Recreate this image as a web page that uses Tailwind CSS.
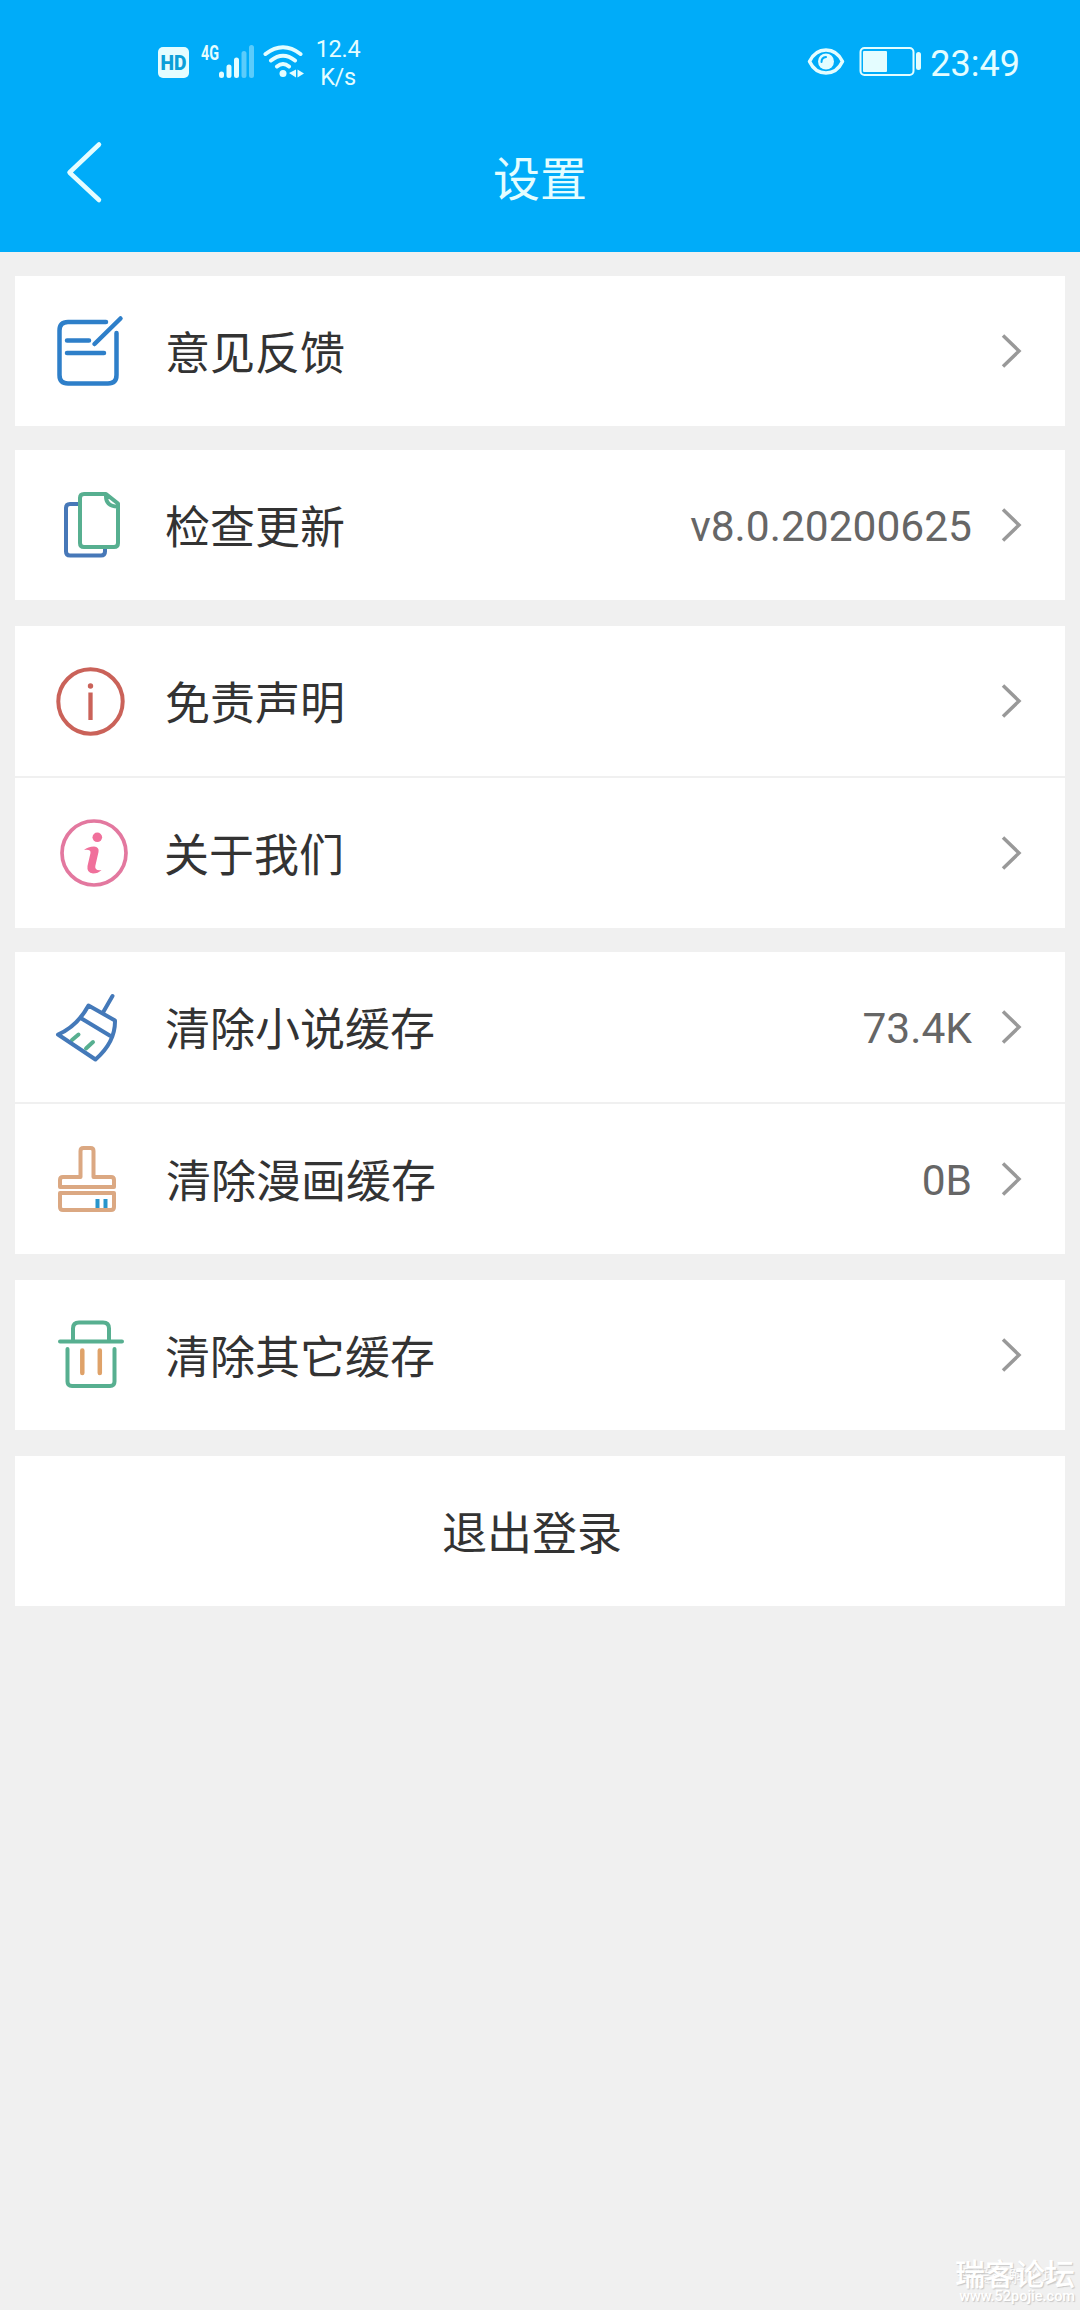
<!DOCTYPE html>
<html lang="zh-CN">
<head>
<meta charset="utf-8">
<title>设置</title>
<script src="https://cdn.jsdelivr.net/npm/@tailwindcss/browser@4"></script>
</head>
<body class="bg-[#f0f0f0]">
<div class="relative flex h-[2310px] w-[1080px] flex-col overflow-hidden bg-[#f0f0f0] font-['Roboto','Noto_Sans_CJK_SC',sans-serif] text-[45px] text-[#333]">
  <header class="h-[252px] bg-[#00acf9] text-[#e4fdff]">
    <div class="flex h-[126px] items-start justify-between pr-[60px] pl-[157px]">
      <div class="flex">
        <svg class="mt-[46px] h-8 w-8" viewBox="0 0 32 32"><rect x="1" y="1" width="31" height="31" rx="5" fill="currentColor"/><text x="16.5" y="23.5" text-anchor="middle" font-family="Roboto" font-weight="900" font-size="19.5" textLength="26" lengthAdjust="spacingAndGlyphs" fill="#0c9fd8">HD</text></svg>
        <svg class="mt-10 ml-3 h-10 w-[56px]" viewBox="201 40 56 40" fill="none" stroke="currentColor" stroke-linecap="round" stroke-width="5"><text x="201" y="60" stroke="none" fill="currentColor" font-family="Roboto" font-weight="700" font-size="20" textLength="18" lengthAdjust="spacingAndGlyphs">4G</text><path d="M221.500 74v1.500M229 67v8.500M236.500 60v15.500"/><path d="M244 53.500v22M251.500 47.500v28" opacity=".4"/></svg>
        <svg class="mt-10 ml-[5px] h-10 w-[42px]" viewBox="262 40 42 40" fill="none" stroke="currentColor" stroke-linecap="round" stroke-width="4"><path d="M265.500 54Q283 40.500 300.500 54M271 60.500Q283 51 295 60.500M277 66.500Q283 61.500 289 66.500"/><circle cx="283" cy="73.500" r="3.500" fill="currentColor" stroke="none"/><path d="M296 69.500v8l-7-4.500zM297.500 69.500l6.500 4-6.500 4z" fill="currentColor" stroke="none"/></svg>
        <div class="mt-[35px] ml-[11px] w-[46px] text-center text-[23.500px] leading-[28px] tracking-[-0.300px]">12.4<br>K/s</div>
      </div>
      <div class="flex">
        <svg class="mt-10 h-10 w-10" viewBox="806 40 40 40"><path d="M809.500 61.500Q815 50 826 50T842.500 61.500Q837 73 826 73T809.500 61.500Z" fill="none" stroke="currentColor" stroke-width="3.500" stroke-linejoin="round"/><circle cx="826" cy="61.500" r="8" fill="currentColor"/><path d="M821.500 62q0-4.500 4.500-5" fill="none" stroke="#00acf9" stroke-width="2" stroke-linecap="round"/></svg>
        <svg class="mt-10 ml-3 h-10 w-16" viewBox="858 40 64 40"><rect x="860.500" y="48" width="53" height="27" rx="4" fill="none" stroke="currentColor" stroke-width="2"/><rect x="863" y="51" width="24" height="21" rx="1" fill="currentColor"/><rect x="916" y="52" width="5" height="18" rx="2.500" fill="currentColor"/></svg>
        <div class="mt-[43px] ml-2 text-[36px] leading-[42px] whitespace-nowrap">23:49</div>
      </div>
    </div>
    <div class="grid h-[126px] grid-cols-[160px_1fr_160px]">
      <svg class="ml-[59px] h-20 w-[50px]" viewBox="60 126 50 80" fill="none" stroke="currentColor" stroke-width="4.500" stroke-linecap="round" stroke-linejoin="round"><path d="M100 144.500L70.500 172.500L100 200"/></svg>
      <h1 class="mt-[19px] text-center text-[47px] leading-[70px]">设置</h1>
    </div>
  </header>

  <main class="flex flex-col px-[15px] pt-6">
    <section class="flex h-[150px] items-center bg-white pr-[41px] pl-[35px]">
      <svg class="h-20 w-20" viewBox="50 311 80 80" fill="none" stroke="#2e7fc9" stroke-width="4.500" stroke-linecap="round" stroke-linejoin="round"><path d="M106 322H68q-8.500 0-8.500 8.500V375q0 8.500 8.500 8.500h40q8.500 0 8.500-8.500V333M67 340.500H89M67 353h37M94.500 344L120.500 318.500"/></svg>
      <span class="ml-[35px] flex-1 pt-[7px]">意见反馈</span>
      <svg class="h-10 w-6" viewBox="0 0 24 40" fill="none" stroke="#999" stroke-width="3.500"><path d="M3 4.500L19 20L3 35.500"/></svg>
    </section>

    <section class="mt-6 flex h-[150px] items-center bg-white pr-[41px] pl-[35px]">
      <svg class="h-20 w-20" viewBox="50 485 80 80" fill="none" stroke-width="4" stroke-linecap="round" stroke-linejoin="round"><path d="M78 504H70q-4 0-4 4v43.500q0 4 4 4h31q4 0 4-4V548" stroke="#4778b8"/><path d="M84 494h22l12 9.500V543q0 4-4 4H84q-4 0-4-4V498q0-4 4-4ZM106 495q-.500 11.500 11.500 11.500" stroke="#57af90"/></svg>
      <span class="ml-[35px] flex-1 pt-[7px]">检查更新</span>
      <span class="mr-[28px] pt-[3px] text-[42.500px] text-[#666]">v8.0.20200625</span>
      <svg class="h-10 w-6" viewBox="0 0 24 40" fill="none" stroke="#999" stroke-width="3.500"><path d="M3 4.500L19 20L3 35.500"/></svg>
    </section>

    <section class="mt-[26px] flex flex-col gap-0.5">
      <div class="flex h-[150px] items-center bg-white pr-[41px] pl-[35px]">
        <svg class="h-20 w-20" viewBox="50 661 80 80" fill="none"><circle cx="90.500" cy="701.500" r="32.200" stroke="#ca6259" stroke-width="4"/><circle cx="90.500" cy="686" r="2.700" fill="#ca6259"/><path d="M90.500 692.500V720" stroke="#ca6259" stroke-width="4.300"/></svg>
        <span class="ml-[35px] flex-1 pt-[7px]">免责声明</span>
        <svg class="h-10 w-6" viewBox="0 0 24 40" fill="none" stroke="#999" stroke-width="3.500"><path d="M3 4.500L19 20L3 35.500"/></svg>
      </div>
      <div class="flex h-[150px] items-center bg-white pr-[41px] pl-[35px]">
        <svg class="h-20 w-20" viewBox="50 813 80 80" fill="none"><circle cx="94" cy="853" r="32" stroke="#e3789f" stroke-width="3.700"/><circle cx="97.300" cy="837.300" r="4.800" fill="#f0709b"/><path d="M84 850Q88 846.500 94 846.500Q99.500 847 98.500 852L95.300 866Q94.500 871 101.500 870Q98 873.500 93 873.500Q86.500 873 87.500 866L90.500 853Q91 849 84 850Z" fill="#f0709b"/></svg>
        <span class="ml-[34px] flex-1 pt-[7px]">关于我们</span>
        <svg class="h-10 w-6" viewBox="0 0 24 40" fill="none" stroke="#999" stroke-width="3.500"><path d="M3 4.500L19 20L3 35.500"/></svg>
      </div>
    </section>

    <section class="mt-6 flex flex-col gap-0.5">
      <div class="flex h-[150px] items-center bg-white pr-[41px] pl-[35px]">
        <svg class="h-20 w-20" viewBox="50 987 80 80" fill="none" stroke-width="4" stroke-linecap="round" stroke-linejoin="round"><path d="M72 1040l6.500-5.500M86 1048.500l7-6.500" stroke="#57af90"/><path d="M112.500 996L103 1012.500M88.500 1005.500L115 1020.500Q115.500 1042 95.500 1059.500L58 1034.500Q77 1026.500 88.500 1005.500ZM81.500 1018.500L110.500 1036" stroke="#4479b9"/></svg>
        <span class="ml-[35px] flex-1 pt-[7px]">清除小说缓存</span>
        <span class="mr-[28px] pt-[3px] text-[42.500px] text-[#666]">73.4K</span>
        <svg class="h-10 w-6" viewBox="0 0 24 40" fill="none" stroke="#999" stroke-width="3.500"><path d="M3 4.500L19 20L3 35.500"/></svg>
      </div>
      <div class="flex h-[150px] items-center bg-white pr-[41px] pl-[35px]">
        <svg class="h-20 w-20" viewBox="50 1139 80 80" fill="none" stroke="#dba882" stroke-width="4" stroke-linejoin="round"><path d="M80.500 1177V1151q0-3 3-3h7q3 0 3 3v26H111q3 0 3 3v7H60v-7q0-3 3-3ZM60 1193h54v14q0 3-3 3H63q-3 0-3-3Z"/><path d="M97.500 1199v9M105.500 1199v9" stroke="#2795cc"/></svg>
        <span class="ml-[36px] flex-1 pt-[7px]">清除漫画缓存</span>
        <span class="mr-[28px] pt-[3px] text-[42.500px] text-[#666]">0B</span>
        <svg class="h-10 w-6" viewBox="0 0 24 40" fill="none" stroke="#999" stroke-width="3.500"><path d="M3 4.500L19 20L3 35.500"/></svg>
      </div>
    </section>

    <section class="mt-[26px] flex h-[150px] items-center bg-white pr-[41px] pl-[35px]">
      <svg class="h-20 w-20" viewBox="50 1315 80 80" fill="none" stroke="#57af90" stroke-width="4" stroke-linecap="round" stroke-linejoin="round"><path d="M73 1341V1328.500q0-6 6-6h24q6 0 6 6V1341M60 1341.500h62M67.500 1349v32.500q0 4.500 4.500 4.500h38q4.500 0 4.500-4.500V1349"/><path d="M82.300 1350.500V1373M99.800 1350.500V1373" stroke="#dfa269" stroke-width="4.500"/></svg>
      <span class="ml-[35px] flex-1 pt-[7px]">清除其它缓存</span>
      <svg class="h-10 w-6" viewBox="0 0 24 40" fill="none" stroke="#999" stroke-width="3.500"><path d="M3 4.500L19 20L3 35.500"/></svg>
    </section>

    <section class="mt-[26px] flex h-[150px] items-center justify-center bg-white pt-[7px] pr-4">退出登录</section>
  </main>

  <div class="absolute right-[5px] bottom-0.5 h-[48px] w-[120px] text-white [text-shadow:1px_1px_1px_#c8c8c8]">
    <div class="absolute top-0.5 right-4 text-[17px] leading-[28px] whitespace-nowrap opacity-80">吾爱破解论坛</div>
    <div class="absolute top-0 right-0 text-[30px] leading-[30px] font-medium whitespace-nowrap">瑞客论坛</div>
    <div class="absolute top-[28px] right-0 text-[14.500px] leading-[18px] font-medium whitespace-nowrap">www.52pojie.com</div>
  </div>
</div>
</body>
</html>
